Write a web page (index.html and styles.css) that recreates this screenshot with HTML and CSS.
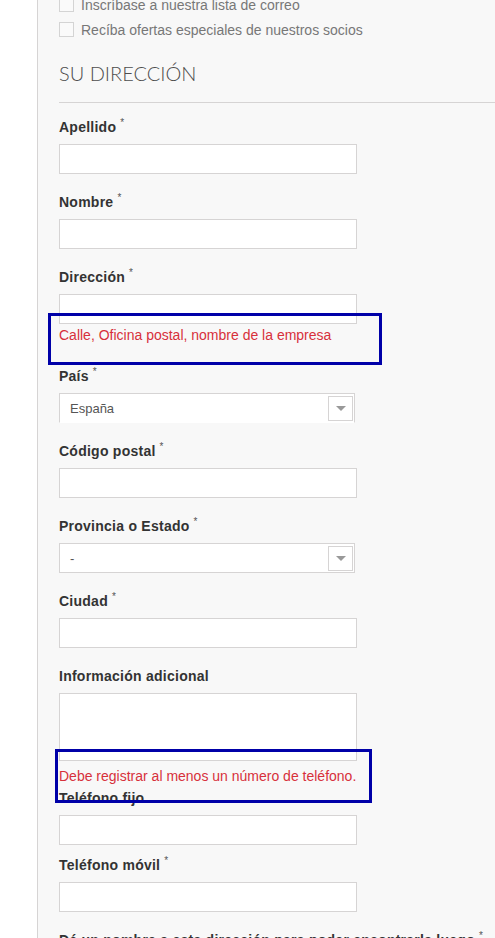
FILE: index.html
```html
<!DOCTYPE html>
<html lang="es">
<head>
    <meta charset="UTF-8">
    <meta name="viewport" content="width=device-width, initial-scale=1.0">
    <title>Su dirección</title>
    <link rel="stylesheet" href="styles.css">
</head>
<body>
    <div class="panel">
        <div class="checks">
            <label class="check"><span class="box"></span>Inscríbase a nuestra lista de correo</label>
            <label class="check"><span class="box"></span>Recíba ofertas especiales de nuestros socios</label>
        </div>

        <h2 class="section-title">SU DIRECCIÓN</h2>
        <hr class="rule">

        <form class="address">
            <div class="field">
                <label>Apellido<sup class="req">*</sup></label>
                <input type="text">
            </div>
            <div class="field">
                <label>Nombre<sup class="req">*</sup></label>
                <input type="text">
            </div>
            <div class="field">
                <label>Dirección<sup class="req">*</sup></label>
                <input type="text">
                <p class="hint hint-address">Calle, Oficina postal, nombre de la empresa</p>
            </div>
            <div class="field">
                <label>País<sup class="req">*</sup></label>
                <div class="select select-open"><span>España</span><span class="arrow"></span></div>
            </div>
            <div class="field">
                <label>Código postal<sup class="req">*</sup></label>
                <input type="text">
            </div>
            <div class="field">
                <label>Provincia o Estado<sup class="req">*</sup></label>
                <div class="select"><span>-</span><span class="arrow"></span></div>
            </div>
            <div class="field">
                <label>Ciudad<sup class="req">*</sup></label>
                <input type="text">
            </div>
            <div class="field field-tight">
                <label>Información adicional</label>
                <textarea></textarea>
            </div>
            <p class="hint hint-phone">Debe registrar al menos un número de teléfono.</p>
            <div class="field field-phone">
                <label>Teléfono fijo</label>
                <input type="text">
            </div>
            <div class="field">
                <label>Teléfono móvil<sup class="req">*</sup></label>
                <input type="text">
            </div>
            <div class="field">
                <label>Dé un nombre a esta dirección para poder encontrarla luego<sup class="req">*</sup></label>
                <input type="text">
            </div>
        </form>

        <!-- marcas azules de la captura -->
        <div class="mark mark-address"></div>
        <div class="mark mark-phone"></div>
    </div>
</body>
</html>
```

FILE: styles.css
```css
body {
    margin: 0;
    background: #fff;
    font-family: "Liberation Sans", Arial, sans-serif;
    color: #333;
    overflow: hidden;
}
.panel {
    position: relative;
    display: flow-root;
    margin-left: 37px;
    min-height: 1100px;
    padding-left: 21px;
    background: #f8f8f8;
    border-left: 1px solid #d6d4d4;
}
.checks {
    margin-top: -8px;
}
.check {
    display: flex;
    align-items: center;
    gap: 7px;
    height: 25px;
    font-size: 14px;
    color: #777;
}
.check .box {
    width: 15px;
    height: 15px;
    box-sizing: border-box;
    border: 1px solid #d4d4d4;
    background: #fafafa;
}
.section-title {
    margin: 19px 0 0;
    font-family: Lato, sans-serif;
    font-weight: 300;
    font-size: 20px;
    line-height: 24px;
    color: #4d4d4d;
}
.rule {
    margin: 17px 0 15px;
    border: 0;
    border-top: 1px solid #d6d4d4;
}
.field {
    margin-bottom: 19px;
}
.field label {
    display: block;
    margin-bottom: 8px;
    font-size: 14px;
    font-weight: bold;
    line-height: 18px;
    letter-spacing: 0.25px;
    color: #333;
}
.req {
    margin-left: 4px;
    font-size: 10px;
    font-weight: normal;
    line-height: 10px;
    vertical-align: top;
    color: #555;
}
.field input,
.field textarea {
    display: block;
    width: 298px;
    height: 30px;
    box-sizing: border-box;
    margin: 0;
    border: 1px solid #d6d4d4;
    background: #fff;
    font: 13px "Liberation Sans", Arial, sans-serif;
}
.field textarea {
    height: 68px;
    resize: none;
}
.field-tight {
    margin-bottom: 5px;
}
.field-phone {
    margin-bottom: 11px;
}
.select {
    display: flex;
    align-items: center;
    justify-content: space-between;
    width: 296px;
    height: 30px;
    box-sizing: border-box;
    padding: 0 1px 0 10px;
    border: 1px solid #d6d4d4;
    background: #fff;
    font-size: 13px;
    color: #555;
}
.select-open {
    border-bottom-color: #fff;
}
.select .arrow {
    display: flex;
    align-items: center;
    justify-content: center;
    width: 25px;
    height: 25px;
    box-sizing: border-box;
    border: 1px solid #d6d4d4;
    background: #fff;
}
.select .arrow::after {
    content: "";
    border-left: 5px solid transparent;
    border-right: 5px solid transparent;
    border-top: 5px solid #999;
}
.hint {
    margin: 0;
    font-size: 14px;
    line-height: 20px;
    color: #d7303b;
}
.hint-address {
    margin-top: 1px;
    padding-bottom: 3px;
}
.hint-phone {
    margin-bottom: 3px;
}
.mark {
    position: absolute;
    box-sizing: border-box;
    border: 3px solid #0000a8;
}
.mark-address {
    left: 10px;
    top: 313px;
    width: 334px;
    height: 52px;
}
.mark-phone {
    left: 17px;
    top: 749px;
    width: 317px;
    height: 54px;
}
```
